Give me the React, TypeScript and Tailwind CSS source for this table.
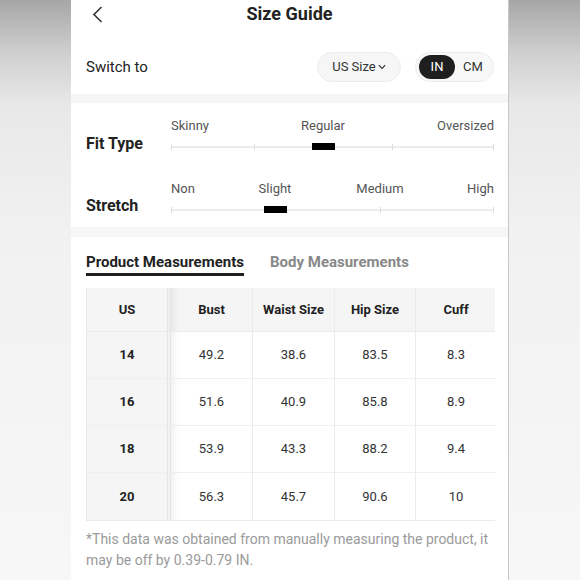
import React from "react";

const font = { fontFamily: "Roboto, 'Liberation Sans', sans-serif" };

type Mark = { label: string; pos: number; align: "left" | "center" | "right" };

function Slider({ marks, ticks, marker }: { marks: Mark[]; ticks: number[]; marker: number }) {
  return (
    <div className="flex-1 flex flex-col gap-[9px]">
      <div className="relative h-[16px] text-[13px] leading-[16px] text-[#555]">
        {marks.map((m) => (
          <span
            key={m.label}
            className="absolute top-0 whitespace-nowrap"
            style={
              m.align === "left"
                ? { left: 0 }
                : m.align === "right"
                ? { right: 0 }
                : { left: m.pos, transform: "translateX(-50%)" }
            }
          >
            {m.label}
          </span>
        ))}
      </div>
      <div className="relative h-[8px]">
        <div className="absolute left-0 right-0 top-[3px] h-[2px] bg-[#ececec]" />
        {ticks.map((t) => (
          <div key={t} className="absolute top-[1px] h-[6px] w-[1px] bg-[#dcdcdc]" style={{ left: t }} />
        ))}
        <div className="absolute right-0 top-[1px] h-[6px] w-[1px] bg-[#dcdcdc]" />
        <div className="absolute top-0 h-[7px] w-[23px] bg-black" style={{ left: marker - 11 }} />
      </div>
    </div>
  );
}

const rows = [
  ["14", "49.2", "38.6", "83.5", "8.3"],
  ["16", "51.6", "40.9", "85.8", "8.9"],
  ["18", "53.9", "43.3", "88.2", "9.4"],
  ["20", "56.3", "45.7", "90.6", "10"],
];

const cols = "grid grid-cols-[80px_4px_81px_82px_81px_81px]";

export default function App() {
  return (
    <div className="flex w-[580px] h-[580px] overflow-hidden bg-white" style={font}>
      <div className="w-[71px] shrink-0 bg-[linear-gradient(to_bottom,#a6a6a6_0%,#cfcfcf_9%,#e8e8e8_18%,#f1f1f1_40%,#f7f7f7_100%)]" />
      <div className="w-[437px] shrink-0 flex flex-col bg-white text-[#222]">
        {/* header */}
        <div className="relative h-[28px] flex items-center justify-center">
          <svg className="absolute left-[21px] top-[6px]" width="11" height="17" viewBox="0 0 11 17" fill="none">
            <path d="M9.5 1L2 8.5L9.5 16" stroke="#333" strokeWidth="1.6" />
          </svg>
          <span className="text-[18px] font-bold leading-[24px] text-[#222]">Size Guide</span>
        </div>
        {/* switch row */}
        <div className="flex items-center pl-[15px] pr-[14px] pt-[24px] pb-[12px]">
          <span className="text-[15px] text-[#222] flex-1">Switch to</span>
          <div className="flex items-center justify-center gap-[2px] w-[84px] h-[30px] rounded-full bg-[#f6f6f6] border border-[#ececec] text-[13px] text-[#333]">
            <span>US Size</span>
            <svg width="8" height="6" viewBox="0 0 8 6" fill="none">
              <path d="M0.8 1.2L4 4.4L7.2 1.2" stroke="#333" strokeWidth="1.1" />
            </svg>
          </div>
          <div className="ml-[14px] flex items-center w-[79px] h-[30px] rounded-full bg-[#f8f8f8] border border-[#ececec] pl-[3px] text-[13px]">
            <span className="w-[36px] h-[24px] rounded-full bg-[#1f1f1f] text-white flex items-center justify-center">IN</span>
            <span className="flex-1 text-center text-[#333] pr-[2px]">CM</span>
          </div>
        </div>
        <div className="h-[9px] bg-[#f6f6f6]" />
        {/* fit section */}
        <div className="flex flex-col pl-[15px] pr-[14px] pt-[15px] pb-[11px] gap-[27px]">
          <div className="flex">
            <div className="w-[85px] pt-[16px] text-[16px] leading-[20px] font-bold">Fit Type</div>
            <Slider
              marks={[
                { label: "Skinny", pos: 0, align: "left" },
                { label: "Regular", pos: 152, align: "center" },
                { label: "Oversized", pos: 323, align: "right" },
              ]}
              ticks={[0, 83, 152, 221]}
              marker={152}
            />
          </div>
          <div className="flex">
            <div className="w-[85px] pt-[15px] text-[16px] leading-[20px] font-bold">Stretch</div>
            <Slider
              marks={[
                { label: "Non", pos: 0, align: "left" },
                { label: "Slight", pos: 104, align: "center" },
                { label: "Medium", pos: 209, align: "center" },
                { label: "High", pos: 323, align: "right" },
              ]}
              ticks={[0, 104, 209]}
              marker={104}
            />
          </div>
        </div>
        <div className="h-[10px] bg-[#f6f6f6]" />
        {/* measurements */}
        <div className="flex flex-col pl-[15px] pr-[13px] pt-[15px]">
          <div className="flex gap-[26px] text-[15px] leading-[20px] font-bold">
            <span className="pb-[1px] border-b-[3px] border-[#1f1f1f] text-[#222]">Product Measurements</span>
            <span className="text-[#888]">Body Measurements</span>
          </div>
          <div className="mt-[12px] flex flex-col border-l border-b border-[#ebebeb] text-[13px] text-[#333]">
            <div className={`${cols} h-[44px] bg-[#f5f5f5] font-bold text-[#222] border-b border-[#ebebeb]`}>
              <div className="flex items-center justify-center">US</div>
              <div className="border-l border-r border-[#e4e4e4] bg-[#efefef]" />
              {["Bust", "Waist Size", "Hip Size", "Cuff"].map((h, i) => (
                <div
                  key={h}
                  className={`flex items-center justify-center ${i > 0 ? "border-l border-[#ebebeb]" : "shadow-[inset_10px_0_8px_-8px_rgba(0,0,0,0.08)]"}`}
                >
                  {h}
                </div>
              ))}
            </div>
            {rows.map((r, ri) => (
              <div key={r[0]} className={`${cols} h-[47px] ${ri < rows.length - 1 ? "border-b border-[#efefef]" : ""}`}>
                <div className="flex items-center justify-center bg-[#f5f5f5] font-bold text-[#222]">{r[0]}</div>
                <div className="border-l border-r border-[#e4e4e4] bg-[#f2f2f2]" />
                {r.slice(1).map((v, i) => (
                  <div
                    key={i}
                    className={`flex items-center justify-center ${i > 0 ? "border-l border-[#ebebeb]" : "shadow-[inset_12px_0_10px_-10px_rgba(0,0,0,0.08)]"}`}
                  >
                    {v}
                  </div>
                ))}
              </div>
            ))}
          </div>
          <p className="mt-[8px] text-[14px] leading-[21px] text-[#9a9a9a]">
            *This data was obtained from manually measuring the product, it may be off by 0.39-0.79 IN.
          </p>
        </div>
      </div>
      <div className="flex-1 border-l border-[#c8c8c8] bg-[linear-gradient(to_bottom,#a6a6a6_0%,#cfcfcf_9%,#e8e8e8_18%,#f1f1f1_40%,#f7f7f7_100%)]" />
    </div>
  );
}
